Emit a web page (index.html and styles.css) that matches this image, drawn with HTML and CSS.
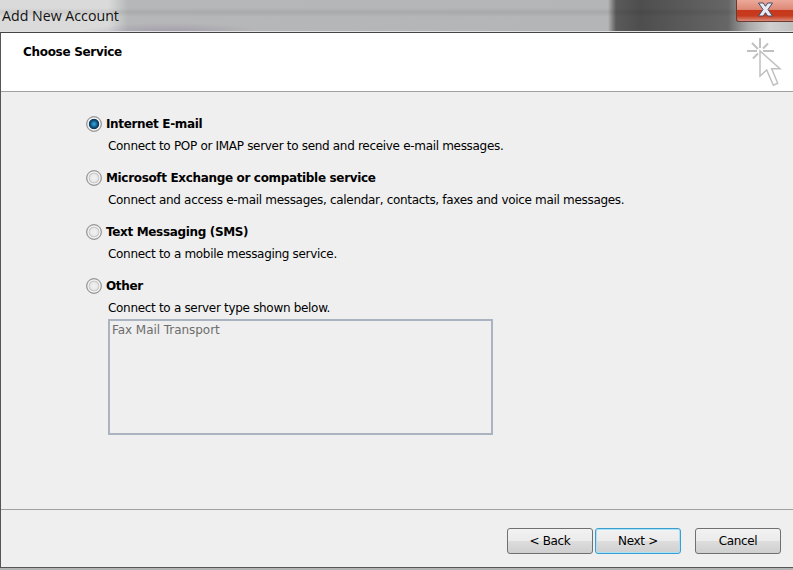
FILE: index.html
```html
<!DOCTYPE html>
<html lang="en">
<head>
<meta charset="utf-8">
<title>Add New Account</title>
<link rel="stylesheet" href="styles.css">
</head>
<body>
<div class="window">
  <div class="titlebar">
    <div class="title">Add New Account</div>
    <div class="close">
      <svg width="17" height="15" viewBox="0 0 17 15"><path d="M1.500 1h4.800L8.500 4.300 10.700 1h4.800l-4.500 6.500 4.500 6.500h-4.800L8.500 10.700 6.300 14H1.500L6 7.500z" fill="#e9ebf3" stroke="#464c66" stroke-width="1"/></svg>
    </div>
  </div>
  <div class="dialog">
    <div class="header">
      <h1 class="heading">Choose Service</h1>
      <svg class="wizard" width="36" height="50" viewBox="0 0 36 50">
        <g stroke="#c0c0c0" stroke-width="2" fill="none">
          <path d="M13 1v10M0 14h10M16 14h11M5 6l6 6M21 6.500l-5 5M6 21.500l5-5"/>
          <path d="M13 14v25l6.700-6 6.600 15.300 4.400-2-6-14.600h8.300z" stroke-width="1.500" fill="#fff"/>
        </g>
      </svg>
    </div>
    <div class="content">
      <div class="option">
        <div class="radio-row"><span class="radio checked"></span><span class="label">Internet E-mail</span></div>
        <p class="desc">Connect to POP or IMAP server to send and receive e-mail messages.</p>
      </div>
      <div class="option">
        <div class="radio-row"><span class="radio"></span><span class="label">Microsoft Exchange or compatible service</span></div>
        <p class="desc">Connect and access e-mail messages, calendar, contacts, faxes and voice mail messages.</p>
      </div>
      <div class="option">
        <div class="radio-row"><span class="radio"></span><span class="label">Text Messaging (SMS)</span></div>
        <p class="desc">Connect to a mobile messaging service.</p>
      </div>
      <div class="option">
        <div class="radio-row"><span class="radio"></span><span class="label">Other</span></div>
        <p class="desc">Connect to a server type shown below.</p>
        <div class="listbox">Fax Mail Transport</div>
      </div>
    </div>
    <div class="footer">
      <button class="btn" type="button">&lt; Back</button>
      <button class="btn default" type="button">Next &gt;</button>
      <button class="btn cancel" type="button">Cancel</button>
    </div>
  </div>
  <div class="bottom"></div>
</div>
</body>
</html>
```
FILE: styles.css
```css
* { box-sizing: border-box; }
html, body { margin: 0; padding: 0; }
body {
  width: 793px;
  height: 570px;
  overflow: hidden;
  font-family: "DejaVu Sans", sans-serif;
  font-size: 12px;
  letter-spacing: -0.31px;
  color: #000;
  background: #efefef;
}
.window { display: flex; flex-direction: column; height: 570px; }
.titlebar {
  height: 32px;
  flex: none;
  display: flex;
  justify-content: space-between;
  align-items: flex-start;
  background:
    radial-gradient(ellipse 90px 9px at 170px 32px, rgba(140,125,160,0.45), rgba(140,125,160,0)),
    linear-gradient(180deg, rgba(0,0,0,0) 8px, rgba(0,0,0,0.07) 12px, rgba(0,0,0,0) 17px),
    linear-gradient(90deg, #dadada 0, #dadada 108px, #b6b7b8 128px, #b4b5b6 608px, #5a5a5a 616px, #4e4e4e 640px, #666 728px, #a8a8a8 748px, #d0d0d0 770px, #c0c0c0 793px);
  border-bottom: 1px solid #e0e0e0;
}
.title {
  font-family: "Open Sans", sans-serif;
  font-size: 14.200px;
  letter-spacing: 0;
  line-height: 20px;
  padding: 6px 0 0 2px;
  color: #111;
}
.close {
  width: 57px;
  height: 22px;
  display: flex;
  align-items: center;
  justify-content: center;
  padding-bottom: 2px;
  border: 1px solid #6b3a30;
  border-top: 0;
  border-right: 0;
  border-radius: 0 0 0 3px;
  background: linear-gradient(180deg, #eba999 0, #dd8876 45%, #c8391c 50%, #c73a1d 75%, #d98a78 100%);
}
.dialog {
  flex: 1;
  display: flex;
  flex-direction: column;
  border-left: 1px solid #555;
  border-top: 1px solid #444;
  border-bottom: 1px solid #555;
  background: #efefef;
}
.header {
  height: 59px;
  flex: none;
  background: #fff;
  border-bottom: 1px solid #a0a0a0;
  padding: 12px 10px 0 22px;
  display: flex;
  justify-content: space-between;
  align-items: flex-start;
}
.heading {
  margin: 0;
  font-size: 12px;
  line-height: 15px;
  font-weight: 700;
  color: #000;
}
.wizard { margin-top: -8px; }
.content { flex: 1; padding: 23px 0 0 85px; }
.option { height: 54px; }
.radio-row { display: flex; align-items: center; gap: 4px; height: 18px; }
.radio {
  width: 16px;
  height: 16px;
  flex: none;
  border-radius: 50%;
  border: 1px solid #979797;
  background: radial-gradient(circle closest-side, #f1f1f1 0, #eaeaea 3.500px, #c4c4c4 5px, #f8f8f8 5.800px, #e8e8e8 6.300px, #b2b2b2 7px);
}
.radio.checked {
  background: radial-gradient(circle closest-side, #3da6d8 0, #1b7fb4 2px, #0f4f7c 3.500px, #123a5c 4.800px, #f8f8f8 5.600px, #e8e8e8 6.300px, #b2b2b2 7px);
}
.label { font-weight: 700; font-size: 12px; line-height: 16px; letter-spacing: -0.34px; }
.desc { margin: 5px 0 0 22px; font-size: 12px; line-height: 16px; }
.listbox {
  width: 385px;
  height: 116px;
  margin: 3px 0 0 22px;
  border: 2px solid #a9b4c0;
  padding: 1px 2px;
  color: #6d6d6d;
  font-size: 12px;
  letter-spacing: -0.05px;
  line-height: 16px;
}
.footer {
  height: 58px;
  flex: none;
  border-top: 1px solid #a0a0a0;
  padding: 18px 12px 0 0;
  display: flex;
  justify-content: flex-end;
  align-items: flex-start;
  gap: 2px;
}
.btn {
  width: 86px;
  height: 26px;
  border: 1px solid #707070;
  border-radius: 3px;
  font-family: "DejaVu Sans", sans-serif;
  font-size: 12px;
  letter-spacing: -0.34px;
  color: #000;
  padding: 0;
  background: linear-gradient(180deg, #f2f2f2 0, #ebebeb 48%, #dddddd 50%, #cfcfcf 100%);
}
.btn.default { border-color: #3c9dd0; box-shadow: inset 0 0 0 1px #a9e2f6; }
.btn.cancel { margin-left: 12px; }
.bottom { height: 2px; flex: none; background: #b4b4b4; }
```
